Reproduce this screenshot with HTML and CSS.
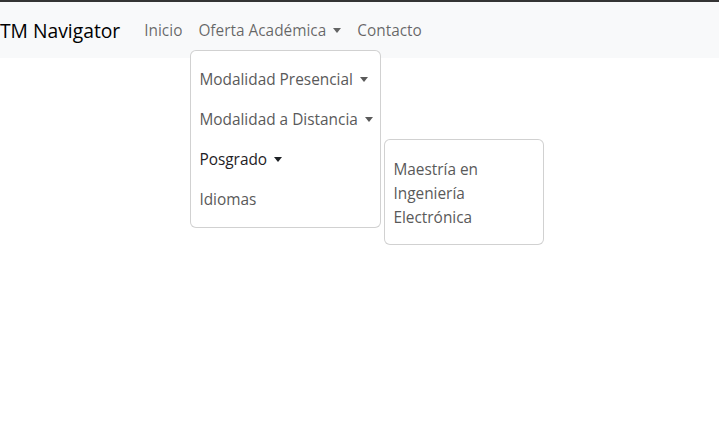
FILE: index.html
```html
<!DOCTYPE html>
<html lang="es">
<head>
<meta charset="utf-8">
<title>TM Navigator</title>
<link rel="stylesheet" href="styles.css">
</head>
<body>
<div class="topline"></div>
<nav class="navbar">
  <a class="brand" href="#">TM Navigator</a>
  <ul class="nav">
    <li><a class="nav-link" href="#">Inicio</a></li>
    <li class="has-menu">
      <a class="nav-link caret" href="#">Oferta Académica</a>
      <ul class="menu">
        <li><a class="item caret" href="#">Modalidad Presencial</a></li>
        <li><a class="item caret" href="#">Modalidad a Distancia</a></li>
        <li class="has-sub">
          <a class="item caret active" href="#">Posgrado</a>
          <ul class="menu sub">
            <li><a class="item" href="#">Maestría en Ingeniería Electrónica</a></li>
          </ul>
        </li>
        <li><a class="item" href="#">Idiomas</a></li>
      </ul>
    </li>
    <li><a class="nav-link" href="#">Contacto</a></li>
  </ul>
</nav>
<main class="content"></main>
</body>
</html>
```
FILE: styles.css
```css
* { box-sizing: border-box; }
html, body { margin: 0; padding: 0; background: #fff; }
body {
  font-family: "Open Sans", "Noto Sans", sans-serif;
  font-size: 15.4px;
  color: #212529;
  min-height: 100vh;
  display: flex;
  flex-direction: column;
}
a { text-decoration: none; }
ul { list-style: none; margin: 0; padding: 0; }
.topline { height: 2px; background: #343434; flex: none; }
.navbar {
  height: 56px;
  flex: none;
  background: #f8f9fa;
  display: flex;
  align-items: center;
  position: relative;
  z-index: 5;
}
.content { flex: 1; }
.brand {
  font-size: 19.3px;
  color: #000;
  margin-right: 16px;
}
.nav { display: flex; align-items: center; }
.nav > li { position: relative; }
.nav-link {
  display: block;
  padding: 8px 8px;
  color: rgba(0,0,0,.6);
}
.caret::after {
  content: "";
  display: inline-block;
  margin-left: 7px;
  vertical-align: 3px;
  border-top: 5px solid;
  border-left: 4.5px solid transparent;
  border-right: 4.5px solid transparent;
}
.menu {
  position: absolute;
  background: #fff;
  border: 1px solid rgba(0,0,0,.18);
  border-radius: 6px;
  padding: 8px 0;
  z-index: 10;
}
.has-menu > .menu {
  top: 100%;
  left: 0;
  margin-top: 1px;
  width: 191px;
}
.item {
  display: block;
  padding: 9px 8px 7px;
  line-height: 24px;
  color: #5a5a5a;
  white-space: nowrap;
}
.item.active { color: #1e2125; }
.has-sub { position: relative; }
.sub {
  top: 0;
  left: 193px;
  width: 160px;
}
.sub .item { white-space: normal; padding: 10px 8px 6px; }
```
